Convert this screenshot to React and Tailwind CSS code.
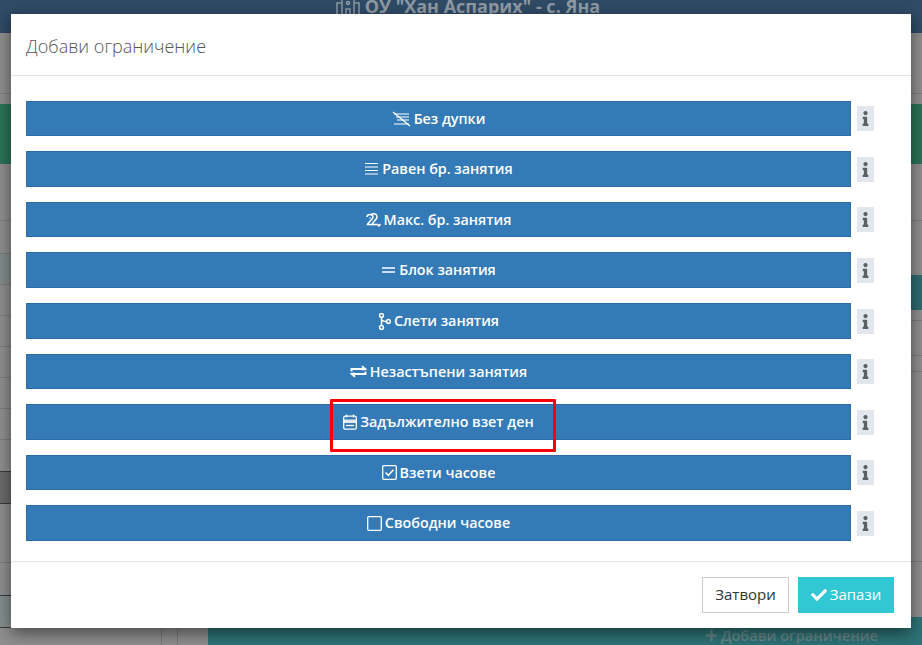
import { FaCheck, FaInfo, FaPlus } from "react-icons/fa"

const IconNoGaps = () => (
  <svg width="19" height="16" viewBox="0 0 19 16" fill="none" stroke="currentColor" strokeWidth="1.200">
    <path d="M2 3h15M4 6h13M5 9h12M2 13h15" />
    <path d="M1 1l17 14" />
  </svg>
)

const IconEqual = () => (
  <svg width="15" height="14" viewBox="0 0 15 14" fill="none" stroke="currentColor" strokeWidth="1.100">
    <path d="M1 1.500h13M1 5h13M1 8.500h13M1 12h13" />
  </svg>
)

const IconMax = () => (
  <svg width="15" height="14" viewBox="0 0 15 14" fill="none" stroke="currentColor" strokeWidth="1.500">
    <path d="M1 4c0-3.500 6-3.500 6 0 0 2.500-4.500 4.500-5.500 7.500h6" />
    <path d="M5 1.500c3-1.500 6-.5 6 2.500 0 2.500-4 4.500-5 7.500h5.500l1.500 1.500 1.500-2" />
    <path d="M3.500 5h1" />
  </svg>
)

const IconBlock = () => (
  <svg width="15" height="14" viewBox="0 0 15 14" fill="none" stroke="currentColor" strokeWidth="1.400">
    <path d="M1 5h13M1 9h13" />
  </svg>
)

const IconMerge = () => (
  <svg width="13" height="17" viewBox="0 0 13 17" fill="none" stroke="currentColor" strokeWidth="1.500">
    <circle cx="3.500" cy="2.500" r="1.900" />
    <circle cx="3.500" cy="14.500" r="1.900" />
    <circle cx="10.500" cy="8.500" r="1.900" />
    <path d="M3.500 4.300v8.400M3.500 6c0 2 2 2.500 5.200 2.500" />
  </svg>
)

const IconSwap = () => (
  <svg width="17" height="13" viewBox="0 0 17 13" fill="none" stroke="currentColor" strokeWidth="1.900">
    <path d="M1.500 6.500V4h13.500M12 1.200L15.200 4 12 4.500" />
    <path d="M15.500 6.500V9H2M5 11.800L1.800 9 5 8.500" />
  </svg>
)

const IconCalendar = () => (
  <svg width="14" height="16" viewBox="0 0 14 16" fill="none" stroke="currentColor" strokeWidth="1.300">
    <rect x="0.700" y="2.200" width="12.600" height="13" rx="1.500" />
    <path d="M3.500 0.500v3M10.500 0.500v3" />
    <path d="M1 5.500h12v3.500H1z" fill="currentColor" stroke="none" opacity="0.85" />
    <path d="M3 11.500h8" />
  </svg>
)

const IconCheckSquare = () => (
  <svg width="15" height="15" viewBox="0 0 15 15" fill="none" stroke="currentColor" strokeWidth="1.300">
    <rect x="0.700" y="0.700" width="13.600" height="13.600" rx="1" />
    <path d="M3.500 7.500l2.800 2.800 5.200-5.600" strokeWidth="1.500" />
  </svg>
)

const IconSquare = () => (
  <svg width="15" height="15" viewBox="0 0 15 15" fill="none" stroke="currentColor" strokeWidth="1.300">
    <rect x="0.700" y="0.700" width="13.600" height="13.600" rx="1" />
  </svg>
)

const IconSchool = () => (
  <svg width="24" height="19" viewBox="0 0 24 19" fill="none" stroke="currentColor" strokeWidth="1.500">
    <path d="M1 19V6h4M23 19V6h-4M6 19V2h12v17" />
    <circle cx="12" cy="6" r="1.500" />
    <path d="M10 19v-7h4v7" />
  </svg>
)

const rules = [
  { label: "Без дупки", icon: IconNoGaps, h: "h-[35px]", mb: "mb-[15px]" },
  { label: "Равен бр. занятия", icon: IconEqual, h: "h-[36px]", mb: "mb-[15px]" },
  { label: "Макс. бр. занятия", icon: IconMax, h: "h-[35px]", mb: "mb-[15px]" },
  { label: "Блок занятия", icon: IconBlock, h: "h-[36px]", mb: "mb-[15px]" },
  { label: "Слети занятия", icon: IconMerge, h: "h-[36px]", mb: "mb-[15px]" },
  { label: "Незастъпени занятия", icon: IconSwap, h: "h-[35px]", mb: "mb-[15px]" },
  { label: "Задължително взет ден", icon: IconCalendar, h: "h-[36px]", mb: "mb-[15px]", marked: true },
  { label: "Взети часове", icon: IconCheckSquare, h: "h-[35px]", mb: "mb-[15px]" },
  { label: "Свободни часове", icon: IconSquare, h: "h-[36px]", mb: "mb-0" },
]

const RuleRow = ({ rule }) => {
  const Icon = rule.icon
  return (
    <div className={`flex items-center ${rule.mb}`}>
      <button className={`relative flex w-[825px] items-center justify-center gap-[3px] border border-[#2e6da4] bg-[#337ab7] text-[14.300px] font-semibold leading-[20px] text-white ${rule.h}`}>
        <Icon />
        <span>{rule.label}</span>
        {rule.marked && (
          <span className="absolute left-[303px] top-[-6px] h-[53px] w-[226px] rounded-[1px] border-[3px] border-[#fb0007]" />
        )}
      </button>
      <span className="ml-[6px] flex h-[25px] w-[17px] items-center justify-center bg-[#e2e6ed] text-[#5c6066]">
        <FaInfo size={15} />
      </span>
    </div>
  )
}

// one row of the dimmed table behind the dialog
const Stripe = ({ className }) => <div className={className} />

export default function App() {
  return (
    <div className="relative h-[645px] w-[922px] overflow-hidden bg-[#8f8f8f] font-['Open_Sans',sans-serif]">
      {/* dimmed page behind the dialog */}
      <div className="flex h-[33px] items-start justify-center overflow-hidden bg-[#2f4b66] text-[#8f9aa5]">
        <div className="-mt-[6px] ml-[14px] flex items-center gap-[5px] text-[18px] font-bold leading-[24px]">
          <IconSchool />
          <span>ОУ "Хан Аспарих" - с. Яна</span>
        </div>
      </div>
      <div className="h-[61px] border-b border-[#7d7d7d]" />
      <div className="mt-[10px] h-[60px] bg-[#2b7358]" />
      <div className="flex h-[481px]">
        <div className="w-[208px] shrink-0">
          <Stripe className="h-[57px] border-b border-[#7a7a7a]" />
          <Stripe className="h-[33px] border-b border-[#7a7a7a]" />
          <Stripe className="h-[31px] border-b border-[#7a7a7a] bg-[#838c8c]" />
          <Stripe className="h-[31px] border-b border-[#7a7a7a]" />
          <Stripe className="h-[31px] border-b border-[#7a7a7a]" />
          <Stripe className="h-[31px] border-b border-[#7a7a7a]" />
          <Stripe className="h-[31px] border-b border-[#7a7a7a]" />
          <Stripe className="h-[31px] border-b border-[#7a7a7a]" />
          <Stripe className="h-[32px] border-b border-[#3b3b3b]" />
          <Stripe className="h-[32px] border-b border-[#3b3b3b] bg-[#6b6b6b]" />
          <Stripe className="h-[59px] border-b border-[#7a7a7a]" />
          <Stripe className="h-[33px] border-b border-[#3b3b3b]" />
          <Stripe className="h-[32px] border-b border-[#3b3b3b] bg-[#858f8f]" />
          <div className="flex h-[18px] pl-[161px]">
            <div className="w-[17px] border-x border-[#7a7a7a]" />
          </div>
        </div>
        <div className="flex flex-1 flex-col">
          <Stripe className="h-[57px] border-b border-[#7a7a7a]" />
          <Stripe className="h-[54px]" />
          <Stripe className="h-[35px] bg-[#2d6b70]" />
          <Stripe className="h-[11px] border-b border-[#7a7a7a]" />
          <Stripe className="h-[35px] border-b border-[#7a7a7a]" />
          <Stripe className="h-[16px] border-b border-[#7a7a7a]" />
          <Stripe className="h-[190px] border-b border-[#7a7a7a]" />
          <Stripe className="h-[55px]" />
          <div className="flex flex-1 items-start justify-end bg-[#2d7377] pr-[44px] pt-[8px] text-[14.600px] font-semibold leading-[20px] text-[#688687]">
            <FaPlus size={13} className="mr-[3px] mt-[4px]" />
            <span>Добави ограничение</span>
          </div>
        </div>
      </div>

      {/* dialog */}
      <div className="absolute left-[11px] top-[14px] w-[900px] bg-white shadow-[0_5px_15px_rgba(0,0,0,0.5)]">
        <div className="h-[62px] border-b border-[#e5e5e5] px-[15px] pt-[20px] text-[18px] font-light leading-[25px] text-[#555]">
          Добави ограничение
        </div>
        <div className="h-[485px] px-[15px] pt-[25px]">
          {rules.map((rule) => (
            <RuleRow key={rule.label} rule={rule} />
          ))}
        </div>
        <div className="flex h-[67px] justify-end gap-[9px] border-t border-[#e5e5e5] pr-[17px] pt-[15px]">
          <button className="h-[36px] w-[87px] border border-[#ccc] bg-white pb-[2px] text-[15px] text-[#333]">Затвори</button>
          <button className="flex h-[36px] w-[96px] items-center justify-center gap-[3px] bg-[#31c7d3] pb-[2px] text-[15px] font-medium text-white">
            <FaCheck size={16} className="mt-[2px]" />
            <span>Запази</span>
          </button>
        </div>
      </div>
    </div>
  )
}
